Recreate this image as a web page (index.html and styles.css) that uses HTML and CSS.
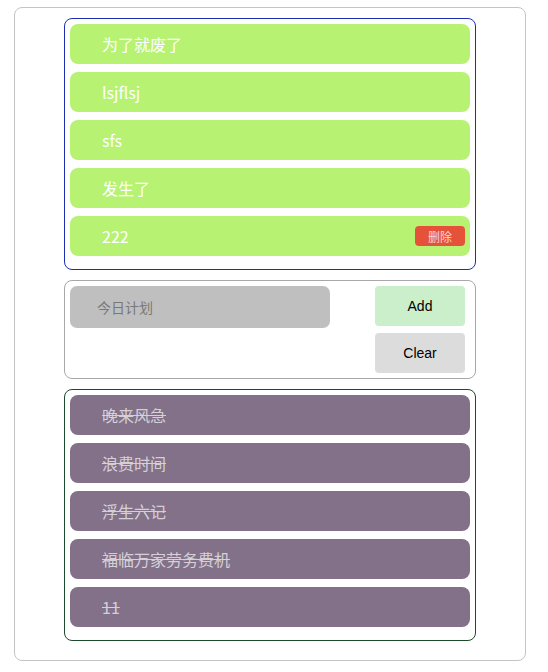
FILE: index.html
```html
<!DOCTYPE html>
<html lang="zh">
<head>
<meta charset="utf-8">
<title>Todo</title>
<link rel="stylesheet" href="styles.css">
</head>
<body>
<div class="app">
  <ul class="panel todo">
    <li class="item"><span>为了就废了</span></li>
    <li class="item"><span>lsjflsj</span></li>
    <li class="item"><span>sfs</span></li>
    <li class="item"><span>发生了</span></li>
    <li class="item"><span>222</span><button class="del">删除</button></li>
  </ul>
  <div class="panel form">
    <input class="field" type="text" placeholder="今日计划">
    <div class="actions">
      <button class="btn add">Add</button>
      <button class="btn clear">Clear</button>
    </div>
  </div>
  <ul class="panel done">
    <li class="item"><span>晚来风急</span></li>
    <li class="item"><span>浪费时间</span></li>
    <li class="item"><span>浮生六记</span></li>
    <li class="item"><span>福临万家劳务费机</span></li>
    <li class="item"><span>11</span></li>
  </ul>
</div>
</body>
</html>
```
FILE: styles.css
```css
* { box-sizing: border-box; }
body {
  margin: 0;
  background: #fff;
  font-family: "Noto Sans CJK SC", "Noto Sans", sans-serif;
}
.app {
  width: 512px;
  height: 654px;
  margin: 7px 0 0 14px;
  border: 1px solid #c4c4c4;
  border-radius: 8px;
  padding: 10px 49px;
  display: flex;
  flex-direction: column;
  gap: 10px;
}
.panel {
  margin: 0;
  list-style: none;
  border-radius: 8px;
  padding: 5px 5px 5px 5px;
}
.todo { border: 1px solid #1d2fb0; }
.done { border: 1px solid #1c4a2c; }
.item {
  height: 40px;
  margin-bottom: 8px;
  border-radius: 8px;
  padding: 0 5px 0 32px;
  display: flex;
  align-items: center;
  justify-content: space-between;
  font-size: 16px;
}
.todo .item { background: #b7f273; color: #fff; }
.done .item { background: #837189; color: #d4d0d6; text-decoration: line-through; }
.del {
  width: 50px;
  height: 20px;
  border: none;
  border-radius: 4px;
  background: #e6513a;
  color: #f6d9cf;
  font-family: "Noto Sans CJK SC", sans-serif;
  font-size: 12px;
  padding: 0;
}
.form {
  border: 1px solid #a8a8a8;
  display: flex;
  justify-content: space-between;
  align-items: flex-start;
  padding: 5px 10px 5px 5px;
}
.field {
  width: 260px;
  height: 42px;
  border: none;
  border-radius: 7px;
  background: #bfbfbf;
  padding: 0 0 0 27px;
  font-family: "Noto Sans CJK SC", sans-serif;
  font-size: 14px;
  outline: none;
}
.field::placeholder { color: #787878; }
.actions {
  display: flex;
  flex-direction: column;
  gap: 7px;
}
.btn {
  width: 90px;
  height: 40px;
  border: none;
  border-radius: 4px;
  font-family: "Liberation Sans", Arial, sans-serif;
  font-size: 14px;
  color: #000;
  padding: 0;
}
.add { background: #cbeecb; }
.clear { background: #dcdcdc; }
```
